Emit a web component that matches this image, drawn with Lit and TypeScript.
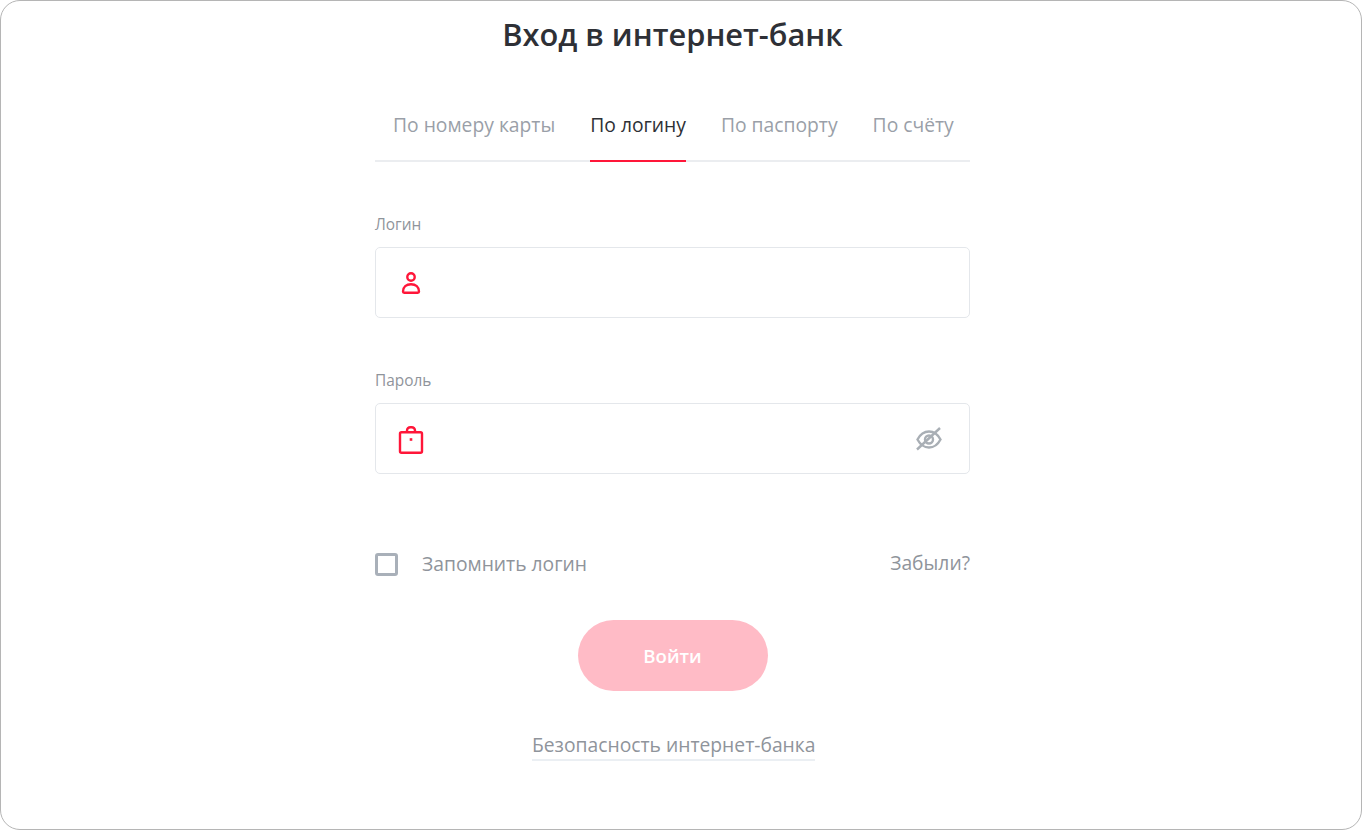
import { LitElement, html, css } from 'lit';
import { customElement, state } from 'lit/decorators.js';

@customElement('app-root')
export class AppRoot extends LitElement {
  @state() tabs = ['По номеру карты', 'По логину', 'По паспорту', 'По счёту'];
  @state() active = 1;

  static styles = css`
    :host {
      display: block;
      font-family: 'Open Sans', 'Noto Sans', sans-serif;
    }
    .frame {
      box-sizing: border-box;
      width: 1362px;
      height: 830px;
      padding-right: 17px;
      border: 1px solid #b5b5b5;
      border-radius: 20px;
      background: #fff;
      display: flex;
      flex-direction: column;
      align-items: center;
      overflow: hidden;
    }
    h1 {
      margin: 12px 0 0;
      font-size: 30.8px;
      line-height: 42px;
      font-weight: 600;
      color: #2e3036;
    }
    .form {
      width: 595px;
      margin-top: 45px;
    }
    .tabs {
      display: flex;
      gap: 35px;
      padding: 0 18px;
      height: 60px;
      border-bottom: 2px solid #ebedf0;
    }
    .tab {
      font-size: 19.3px;
      line-height: 50px;
      height: 62px;
      box-sizing: border-box;
      color: #9a9fa8;
      white-space: nowrap;
    }
    .tab.active {
      color: #2e3036;
      border-bottom: 2px solid #ff1639;
    }
    .label {
      font-size: 15.4px;
      line-height: 20px;
      color: #8f949b;
    }
    .login-label {
      margin-top: 53px;
    }
    .pass-label {
      margin-top: 53px;
    }
    .field {
      box-sizing: border-box;
      height: 71px;
      margin-top: 12px;
      border: 1px solid #e4e7eb;
      border-radius: 5px;
      display: flex;
      align-items: center;
      justify-content: space-between;
      padding: 0 25px 0 20px;
    }
    .field svg {
      display: block;
    }
    .options {
      display: flex;
      align-items: center;
      justify-content: space-between;
      margin-top: 77px;
      height: 26px;
    }
    .remember {
      display: flex;
      align-items: center;
      gap: 24px;
      font-size: 19.3px;
      color: #8f949b;
    }
    .remember span {
      margin-top: -2px;
    }
    .box {
      box-sizing: border-box;
      width: 23px;
      height: 23px;
      border: 3px solid #a9b0b9;
      border-radius: 3px;
    }
    .forgot {
      font-size: 19.3px;
      color: #8f949b;
      margin-top: -4px;
    }
    .submit {
      display: block;
      width: 190px;
      height: 71px;
      margin: 43px auto 0;
      border: 0;
      border-radius: 36px;
      background: #ffbbc6;
      color: #fff;
      font: 600 18.6px 'Open Sans', sans-serif;
    }
    .link {
      display: block;
      width: max-content;
      margin: 40px 0 0 157px;
      font-size: 19.3px;
      line-height: 28px;
      color: #8f949b;
      border-bottom: 2px solid #ebeff3;
      text-decoration: none;
    }
  `;

  render() {
    return html`
      <div class="frame">
        <h1>Вход в интернет-банк</h1>
        <div class="form">
          <div class="tabs">
            ${this.tabs.map(
              (t, i) => html`<div class="tab ${i === this.active ? 'active' : ''}">${t}</div>`
            )}
          </div>
          <div class="label login-label">Логин</div>
          <div class="field">
            <svg width="30" height="30" viewBox="0 0 30 30" fill="none" stroke="#ff1639" stroke-width="2.4">
              <circle cx="15" cy="9" r="3.7" />
              <path d="M7 23.600c0-4.600 3.400-7.400 8-7.400s8 2.800 8 7.400c0 .7-.5 1.200-1.200 1.200H8.200c-.7 0-1.200-.5-1.200-1.200z" />
            </svg>
          </div>
          <div class="label pass-label">Пароль</div>
          <div class="field">
            <svg width="30" height="30" viewBox="0 0 30 30" fill="none" stroke="#ff1639" stroke-width="2.4">
              <rect x="4" y="8.200" width="22" height="20.600" rx="1.500" />
              <path d="M11 8.200V6.500a3.300 3.300 0 0 1 3.300-3.300h1.400A3.300 3.300 0 0 1 19 6.500v1.700" />
              <rect x="13.700" y="14.200" width="2.600" height="2.600" fill="#ff1639" stroke="none" />
            </svg>
            <svg width="30" height="30" viewBox="0 0 30 30" fill="none" stroke="#a9afb5" stroke-width="2.4">
              <path d="M3.500 15.500c2.800-5.300 6.600-8 11.500-8s8.700 2.700 11.500 8c-2.800 5.300-6.600 8-11.500 8s-8.700-2.700-11.500-8z" />
              <circle cx="15" cy="15.500" r="4" />
              <path d="M3 25.500 26 4" />
            </svg>
          </div>
          <div class="options">
            <div class="remember"><div class="box"></div><span>Запомнить логин</span></div>
            <div class="forgot">Забыли?</div>
          </div>
          <button class="submit">Войти</button>
          <a class="link">Безопасность интернет-банка</a>
        </div>
      </div>
    `;
  }
}
